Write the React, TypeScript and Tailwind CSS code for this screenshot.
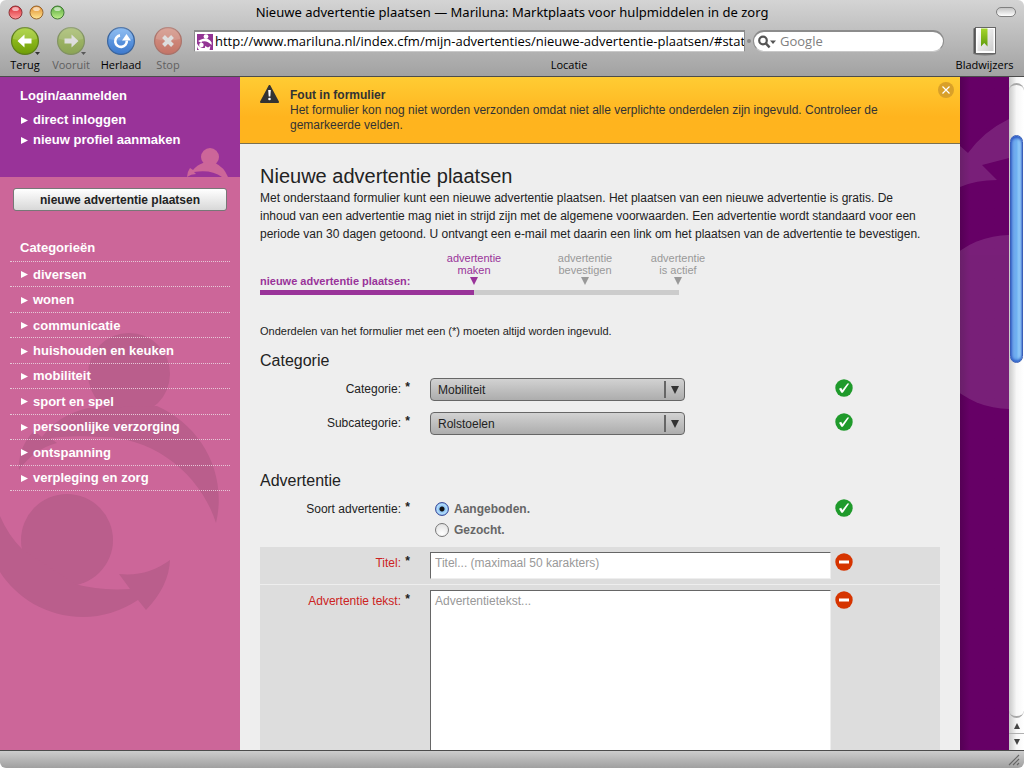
import React, { useState } from 'react';

const categories = [
    'diversen',
    'wonen',
    'communicatie',
    'huishouden en keuken',
    'mobiliteit',
    'sport en spel',
    'persoonlijke verzorging',
    'ontspanning',
    'verpleging en zorg',
];

const steps = [
    { id: 'maken', lines: ['advertentie', 'maken'], active: true },
    { id: 'bevestigen', lines: ['advertentie', 'bevestigen'], active: false },
    { id: 'actief', lines: ['advertentie', 'is actief'], active: false },
];

/* ---------- Icons ---------- */

const OkIcon = () => (
    <svg viewBox="0 0 18 18" className="h-[18px] w-[18px]" role="img" aria-label="ok">
        <circle cx="9" cy="9" r="8.7" fill="#1f9a2b" />
        <path d="M4 9.8 6.2 8.8 7.4 11 12.4 4.4 14.2 4.6 7.8 13.8 6.4 13.8Z" fill="#fff" />
    </svg>
);

const ErrorIcon = () => (
    <svg viewBox="0 0 18 18" className="h-[18px] w-[18px]" role="img" aria-label="fout">
        <circle cx="9" cy="9" r="8.7" fill="#d63400" />
        <rect x="4" y="7.5" width="10" height="3" fill="#fff" />
    </svg>
);

const Bullet = () => (
    <svg viewBox="0 0 7 7" className="h-[7px] w-[7px] flex-none" aria-hidden="true">
        <path d="M0 0 7 3.5 0 7Z" fill="#fff" />
    </svg>
);

const DownTriangle = ({ className }: { className: string }) => (
    <svg viewBox="0 0 8 8" className={className} aria-hidden="true">
        <path d="M0 0H8L4 8Z" fill="currentColor" />
    </svg>
);

const TrafficLight = ({ id, light, dark, rim }: { id: string; light: string; dark: string; rim: string }) => (
    <svg viewBox="0 0 15 15" className="h-[15px] w-[15px]" aria-hidden="true">
        <defs>
            <linearGradient id={id} x1="0" y1="0" x2="0" y2="1">
                <stop offset="0" stopColor={dark} />
                <stop offset="1" stopColor={light} />
            </linearGradient>
        </defs>
        <circle cx="7.5" cy="7.5" r="6.5" fill={`url(#${id})`} stroke={rim} />
        <ellipse cx="7.5" cy="4" rx="3.4" ry="2" fill="#fff" opacity="0.6" />
    </svg>
);

type RoundIconProps = { id: string; from: string; to: string; rim: string; menu?: boolean; children: React.ReactNode };

const RoundIcon = ({ id, from, to, rim, menu, children }: RoundIconProps) => (
    <svg viewBox="0 0 30 30" className="h-[30px] w-[30px]" aria-hidden="true">
        <defs>
            <linearGradient id={id} x1="0" y1="0" x2="0" y2="1">
                <stop offset="0" stopColor={from} />
                <stop offset="1" stopColor={to} />
            </linearGradient>
        </defs>
        <circle cx="15" cy="15" r="13.4" fill={`url(#${id})`} stroke={rim} strokeWidth="1.2" />
        <path d="M3 13A12 12 0 0 1 27 13Q15 16 3 13Z" fill="#fff" opacity="0.16" />
        {children}
        {menu && <path d="M25 26h5l-2.5 3Z" fill="#333" />}
    </svg>
);

const ARROW_LEFT = 'M7.5 15 14.5 8.5V12.6H21.5V17.4H14.5V21.5Z';
const ARROW_RIGHT = 'M22.5 15 15.5 8.5V12.6H8.5V17.4H15.5V21.5Z';

const Favicon = () => (
    <svg viewBox="0 0 16 16" className="h-4 w-4 flex-none" aria-hidden="true">
        <rect width="16" height="16" fill="#933494" />
        <circle cx="9" cy="2.6" r="2.4" fill="#fff" />
        <path d="M1 7 4 5.6Q11 2.6 14.6 8.4L14.6 11Q10 6 5 7.6L4.4 9Z" fill="#fff" />
        <circle cx="4.4" cy="11" r="2.3" fill="#fff" />
        <path d="M0 9.6Q3 15 8 13.8L8 12 11 13.4 13.4 12 12.6 16H2Q0 14 0 12Z" fill="#fff" />
    </svg>
);

const BookmarkIcon = () => (
    <svg viewBox="0 0 26 30" className="h-[30px] w-[26px]" aria-hidden="true">
        <defs>
            <linearGradient id="page" x1="0" y1="0" x2="1" y2="1">
                <stop offset="0" stopColor="#fff" />
                <stop offset="1" stopColor="#ccc" />
            </linearGradient>
            <linearGradient id="ribbon" x1="0" y1="0" x2="0" y2="1">
                <stop offset="0" stopColor="#a5d62c" />
                <stop offset="1" stopColor="#5f9b0c" />
            </linearGradient>
        </defs>
        <ellipse cx="13" cy="28" rx="11" ry="1.5" fill="#000" opacity="0.3" />
        <path d="M1.5 2.5 4 1.5V27L1.5 28Z" fill="#555" />
        <rect x="3.5" y="1.5" width="20" height="26" fill="#fff" stroke="#666" />
        <rect x="5.5" y="3" width="16" height="22" fill="url(#page)" />
        <path d="M9 2.5H15.5V20.5L12.2 17 9 20.5Z" fill="url(#ribbon)" />
    </svg>
);

/* ---------- Browser window ---------- */

type ToolButtonProps = { label: string; className: string; disabled?: boolean; children: React.ReactNode };

const ToolButton = ({ label, className, disabled, children }: ToolButtonProps) => (
    <button
        type="button"
        disabled={disabled}
        className={`flex flex-none flex-col items-center gap-px text-[11px] leading-4 ${className} ${disabled ? 'text-[#606060]' : 'text-black'}`}
    >
        <span className={disabled ? 'opacity-70' : ''}>{children}</span>
        {label}
    </button>
);

const BrowserHeader = () => (
    <header className="flex-none rounded-t-md border-b border-[#4c4c4c] bg-linear-to-b from-[#d4d4d4] to-[#a2a2a2] font-['Open_Sans','Noto_Sans',sans-serif]">
        <div className="flex h-6 items-center px-2">
            <div className="flex w-16 gap-[6px]">
                <TrafficLight id="tl-red" dark="#d8242f" light="#ff9a9a" rim="#8c3438" />
                <TrafficLight id="tl-yellow" dark="#e08a2c" light="#ffe794" rim="#96652f" />
                <TrafficLight id="tl-green" dark="#52a63a" light="#c2f08c" rim="#417a35" />
            </div>
            <p className="flex-1 truncate text-center font-['Noto_Sans',sans-serif] text-[13px] leading-5 text-black">
                Nieuwe advertentie plaatsen — Mariluna: Marktplaats voor hulpmiddelen in de zorg
            </p>
            <div className="flex w-16 justify-end">
                <button type="button" aria-label="Werkbalk tonen" className="h-[10px] w-5 rounded-full border border-[#808080] bg-linear-to-b from-[#c4c4c4] to-white" />
            </div>
        </div>
        <div className="flex h-[52px] pt-[2px]">
            <ToolButton label="Terug" className="ml-0.5 w-[46px]">
                <RoundIcon id="back" from="#a4cf2b" to="#6f9d07" rim="#5d7d1c" menu>
                    <path d={ARROW_LEFT} fill="#fff" />
                </RoundIcon>
            </ToolButton>
            <ToolButton label="Vooruit" className="w-[46px]" disabled>
                <RoundIcon id="forward" from="#a0bf4e" to="#7c9f30" rim="#6c8440" menu>
                    <path d={ARROW_RIGHT} fill="#eee" />
                </RoundIcon>
            </ToolButton>
            <ToolButton label="Herlaad" className="w-[54px]">
                <RoundIcon id="reload" from="#76b0f0" to="#3d78cc" rim="#3a649c">
                    <path d="M14 9.4A5.8 5.8 0 1 0 20.8 14.6" fill="none" stroke="#fff" strokeWidth="2.6" />
                    <path d="M16 14.5 20.5 8 25 14.5Z" fill="#fff" />
                </RoundIcon>
            </ToolButton>
            <ToolButton label="Stop" className="w-10" disabled>
                <RoundIcon id="stop" from="#e08672" to="#cc5b48" rim="#a5584c">
                    <path d="M10.5 10.5 19.5 19.5M19.5 10.5 10.5 19.5" stroke="#eee" strokeWidth="4" />
                </RoundIcon>
            </ToolButton>
            <div className="mr-0.5 ml-[6px] flex min-w-0 flex-1 flex-col pt-1">
                <div className="flex items-center gap-0.5">
                    <div className="flex h-[22px] min-w-0 flex-1 items-center gap-0.5 border border-t-2 border-[#8c8c8c] border-b-[#c8c8c8] bg-white pl-0.5">
                        <Favicon />
                        <input
                            id="location"
                            type="text"
                            defaultValue="http://www.mariluna.nl/index.cfm/mijn-advertenties/nieuwe-advertentie-plaatsen/#stat"
                            className="h-[18px] min-w-0 flex-1 bg-transparent text-[13px] text-black outline-none"
                        />
                    </div>
                    <span className="h-1 w-1 rounded-full bg-[#8a8a8a]" />
                    <div className="flex h-[22px] w-[191px] flex-none items-center gap-1 rounded-full border border-t-2 border-[#8c8c8c] border-b-[#c8c8c8] bg-white pl-1">
                        <svg viewBox="0 0 18 14" className="h-[14px] w-[18px] flex-none" aria-hidden="true">
                            <circle cx="5" cy="5.5" r="3.8" fill="none" stroke="#555" strokeWidth="2.2" />
                            <path d="M7.6 8.2 11.6 12.4" stroke="#555" strokeWidth="2.4" />
                            <path d="M12 5.5h6l-3 3.5Z" fill="#555" />
                        </svg>
                        <input
                            type="search"
                            aria-label="Zoeken met Google"
                            placeholder="Google"
                            className="min-w-0 flex-1 bg-transparent text-[13px] outline-none placeholder:text-[#808080]"
                        />
                    </div>
                </div>
                <label htmlFor="location" className="mt-[5px] text-center text-[11px] leading-4 text-black">
                    Locatie
                </label>
            </div>
            <ToolButton label="Bladwijzers" className="mr-px w-[77px]">
                <BookmarkIcon />
            </ToolButton>
        </div>
    </header>
);

const Scrollbar = () => (
    <div className="flex w-[15px] flex-none flex-col bg-linear-to-r from-[#c9c9c9] via-[#f7f7f7] to-white" aria-hidden="true">
        <div className="mt-[6px] h-[52px] rounded-t-full border-t-2 border-[#a8a8a8]" />
        <div className="mx-px h-[228px] rounded-full border border-[#3a5fb8] bg-linear-to-r from-[#6f9fe6] via-[#6fb0f2] to-[#b4e6ff] shadow-[inset_0_2px_3px_#2750c0,inset_0_-2px_3px_#2f62c8]" />
        <div className="flex-1 rounded-b-full border-b-2 border-[#a8a8a8]" />
        <div className="flex h-4 items-center justify-center border-b border-[#b0b0b0]">
            <DownTriangle className="h-[6px] w-[6px] rotate-180 text-[#444]" />
        </div>
        <div className="flex h-4 items-center justify-center">
            <DownTriangle className="h-[6px] w-[6px] text-[#444]" />
        </div>
    </div>
);

const StatusBar = () => (
    <footer className="flex h-[18px] flex-none items-end justify-end rounded-b-md border-t border-[#4c4c4c] bg-linear-to-b from-[#cdcdcd] to-[#a0a0a0] px-1 pb-0.5">
        <svg viewBox="0 0 12 12" className="h-3 w-3" aria-hidden="true">
            <path d="M1 11 11 1M5 11 11 5M9 11 11 9" stroke="#666" strokeWidth="1.2" />
        </svg>
    </footer>
);

/* ---------- Page ---------- */

const SidebarLink = ({ children }: { children: string }) => (
    <a href="#" className="flex items-center gap-[5px] pl-[11px] text-[13px] leading-5 font-bold text-white">
        <Bullet />
        {children}
    </a>
);

const Sidebar = () => (
    <aside className="relative w-60 flex-none bg-[#cc6699]">
        <svg viewBox="0 0 240 300" className="absolute top-[256px] left-0 h-[300px] w-60" aria-hidden="true">
            <g fill="#ba5e8c">
                <circle cx="129" cy="41" r="41" />
                <circle cx="67" cy="207" r="46" />
                <path d="M19 137Q18 114 34 98L42 104Q58 82 88 75L157 73C200 92 228 139 216 190C200 139 150 102 98 104Q76 102 50 105L57 110Q34 116 19 137Z" />
                <path d="M0 183Q8 202 22 216L75 251Q100 258 130 256L119 241Q147 244 170 227Q169 253 146 277L138 267Q112 284 83 284C46 284 16 264 0 239Z" />
            </g>
        </svg>
        <section className="relative h-[100px] bg-[#993399] px-[10px] pt-[9px]">
            <h2 className="pl-[10px] text-[13px] leading-5 font-bold text-white">Login/aanmelden</h2>
            <nav className="mt-1">
                <SidebarLink>direct inloggen</SidebarLink>
                <SidebarLink>nieuw profiel aanmaken</SidebarLink>
            </nav>
            <svg viewBox="0 0 42 30" className="absolute right-[11px] bottom-0 h-[30px] w-[42px]" aria-hidden="true">
                <circle cx="23" cy="10" r="9" fill="#cc6699" />
                <path d="M0 30Q0 25 3 21L6 23Q10 18 16 16H28Q37 20 41 30H35Q24 22 7 25L9 27Q4 27 0 30Z" fill="#cc6699" />
            </svg>
        </section>
        <div className="relative px-[10px] pt-[11px]">
            <button
                type="button"
                className="mx-[3px] block h-[23px] w-[214px] rounded-[3px] border border-[#777] bg-linear-to-b from-white to-[#d8d8d8] text-[12px] leading-5 font-bold text-[#222]"
            >
                nieuwe advertentie plaatsen
            </button>
            <h2 className="mt-[27px] border-b border-dotted border-[#e6c9d8] pb-[3px] pl-[10px] text-[13px] leading-5 font-bold text-white">
                Categorieën
            </h2>
            <ul className="grid h-[229px] auto-rows-fr">
                {categories.map((category) => (
                    <li key={category} className="flex items-center border-b border-dotted border-[#e6c9d8] pt-px">
                        <SidebarLink>{category}</SidebarLink>
                    </li>
                ))}
            </ul>
        </div>
    </aside>
);

const ErrorBanner = ({ onClose }: { onClose: () => void }) => (
    <div role="alert" className="flex items-start border-b border-[#7a7050] bg-linear-to-b from-[#ffcc33] to-[#ffb41e] to-60% py-[10px] pr-[6px] pl-5 text-[#333]">
        <svg viewBox="0 0 19 18" className="mt-[-2px] mr-[11px] h-[18px] w-[19px] flex-none" aria-hidden="true">
            <path d="M9.5 1 18 17H1Z" fill="#333" stroke="#333" strokeWidth="2" strokeLinejoin="round" />
            <path d="M8.2 5H10.8L10.3 11.6H8.7Z" fill="#fff" />
            <circle cx="9.5" cy="14" r="1.3" fill="#fff" />
        </svg>
        <div className="min-w-0 flex-1 pr-8">
            <h2 className="text-[12px] leading-4 font-bold">Fout in formulier</h2>
            <p className="text-[12px] leading-[15px]">
                Het formulier kon nog niet worden verzonden omdat niet alle verplichte onderdelen zijn ingevuld. Controleer de
                gemarkeerde velden.
            </p>
        </div>
        <button type="button" aria-label="Sluiten" onClick={onClose} className="mt-[-5px] flex h-4 w-4 items-center justify-center rounded-full bg-[#d9a029]">
            <svg viewBox="0 0 8 8" className="h-2 w-2" aria-hidden="true">
                <path d="M0.5 0.5 7.5 7.5M7.5 0.5 0.5 7.5" stroke="#fff" strokeWidth="1.2" />
            </svg>
        </button>
    </div>
);

const Progress = () => (
    <div className="mt-[9px] w-[448px] text-[11px] leading-3">
        <div className="grid grid-cols-[184px_60px_51px_60px_33px_60px]">
            <p className="self-end leading-2 font-bold text-[#993399]">nieuwe advertentie plaatsen:</p>
            {steps.map((step, i) => (
                <React.Fragment key={step.id}>
                    {i > 0 && <span />}
                    <div className={`flex flex-col items-center ${step.active ? 'text-[#993399]' : 'text-[#999]'}`}>
                        {step.lines.map((line) => (
                            <span key={line}>{line}</span>
                        ))}
                        <DownTriangle className="mt-px h-2 w-2" />
                    </div>
                </React.Fragment>
            ))}
        </div>
        <div className="mt-[5px] flex h-[5px] w-[419px] bg-[#ccc]">
            <div className="w-[214px] bg-[#993399]" />
        </div>
    </div>
);

type FieldProps = { label: string; htmlFor?: string; className?: string; valid: boolean; children: React.ReactNode };

const Field = ({ label, htmlFor, className = '', valid, children }: FieldProps) => (
    <div className={`flex items-start ${className}`}>
        <label htmlFor={htmlFor} className={`w-[150px] flex-none text-right text-[12px] leading-[22px] ${valid ? 'text-[#222]' : 'text-[#cc2222]'}`}>
            {label}: <b className="ml-px align-[2px] leading-none text-[#222]">*</b>
        </label>
        <div className="ml-5 w-[401px] flex-none">{children}</div>
        <span className="mt-px ml-1 flex-none">{valid ? <OkIcon /> : <ErrorIcon />}</span>
    </div>
);

const SelectBox = ({ id, options }: { id: string; options: string[] }) => (
    <div className="relative w-[255px]">
        <select
            id={id}
            className="block h-[23px] w-full appearance-none rounded-[4px] border border-[#666] bg-linear-to-b from-[#d2d2d2] to-[#adadad] pl-[7px] text-[12px] text-[#222]"
        >
            {options.map((option) => (
                <option key={option}>{option}</option>
            ))}
        </select>
        <span className="pointer-events-none absolute inset-y-[3px] right-0 flex w-[21px] items-center border-l-2 border-[#666] pl-[5px]">
            <DownTriangle className="h-2 w-2 text-[#333]" />
        </span>
    </div>
);

const radioClass =
    'h-[14px] w-[14px] appearance-none rounded-full border border-[#777] bg-[radial-gradient(circle_at_50%_80%,#fff,#ddd)] checked:border-[#3d4d9c] checked:bg-[radial-gradient(circle,#111_0_2px,#8fc4f5_3px,#b4defa_5px,#4b7fd0_7px)]';

const AdvertForm = () => {
    const [kind, setKind] = useState('aangeboden');

    return (
        <form>
            <p className="mt-7 text-[11px] leading-4">Onderdelen van het formulier met een (*) moeten altijd worden ingevuld.</p>

            <h2 className="mt-3 text-[16px] leading-5">Categorie</h2>
            <Field label="Categorie" htmlFor="categorie" className="mt-[7px] h-[34px]" valid>
                <SelectBox id="categorie" options={['Mobiliteit', 'Wonen', 'Communicatie']} />
            </Field>
            <Field label="Subcategorie" htmlFor="subcategorie" className="h-[34px]" valid>
                <SelectBox id="subcategorie" options={['Rolstoelen', 'Scootmobielen']} />
            </Field>

            <h2 className="mt-[25px] text-[16px] leading-5">Advertentie</h2>
            <Field label="Soort advertentie" htmlFor="aangeboden" className="mt-[7px] h-[49px]" valid>
                {['Aangeboden', 'Gezocht'].map((option) => (
                    <label key={option} className="flex h-[21px] items-center gap-[5px] pl-[5px] text-[12px] font-bold text-[#666]">
                        <input
                            id={option.toLowerCase()}
                            type="radio"
                            name="soort"
                            value={option.toLowerCase()}
                            checked={kind === option.toLowerCase()}
                            onChange={(e) => setKind(e.target.value)}
                            className={radioClass}
                        />
                        {option}.
                    </label>
                ))}
            </Field>

            <Field label="Titel" htmlFor="titel" className="bg-[#ddd] py-[5px]" valid={false}>
                <input
                    id="titel"
                    type="text"
                    maxLength={50}
                    placeholder="Titel... (maximaal 50 karakters)"
                    className="block h-[27px] w-full border border-t-[#666] border-r-[#eee] border-b-[#eee] border-l-[#666] bg-white px-1 pb-[5px] text-[12px] outline-none placeholder:text-[#999]"
                />
            </Field>
            <Field label="Advertentie tekst" htmlFor="tekst" className="mt-px bg-[#ddd] py-[5px]" valid={false}>
                <textarea
                    id="tekst"
                    rows={14}
                    placeholder="Advertentietekst..."
                    className="block w-full resize-none border border-t-[#666] border-r-[#eee] border-b-[#eee] border-l-[#666] bg-white px-1 py-0.5 text-[12px] leading-4 outline-none placeholder:text-[#999]"
                />
            </Field>
        </form>
    );
};

const PurpleMargin = () => (
    <div className="w-[49px] flex-none overflow-hidden bg-linear-to-r from-[#550055] to-[#660066] to-20%">
        <svg viewBox="0 0 49 340" className="h-[340px] w-[49px]" aria-hidden="true">
            <g fill="#fff" opacity="0.12">
                <path d="M0 69 8 76Q24 54 49 42V81L22 88 37 103Q16 103 0 110Z" />
                <circle cx="50" cy="245" r="87" />
            </g>
        </svg>
    </div>
);

export default function App() {
    const [showError, setShowError] = useState(true);

    return (
        <div className="flex h-screen flex-col overflow-hidden bg-white font-['Liberation_Sans',Arial,sans-serif]">
            <BrowserHeader />
            <div className="flex min-h-0 flex-1 overflow-hidden">
                <Sidebar />
                <main className="min-w-0 flex-1 overflow-hidden bg-[#eee] text-[#222]">
                    {showError && <ErrorBanner onClose={() => setShowError(false)} />}
                    <div className="px-5 pt-5">
                        <h1 className="text-[20px] leading-6">Nieuwe advertentie plaatsen</h1>
                        <p className="mt-px pr-3 text-[12px] leading-[18px]">
                            Met onderstaand formulier kunt een nieuwe advertentie plaatsen. Het plaatsen van een nieuwe advertentie is gratis. De
                            inhoud van een advertentie mag niet in strijd zijn met de algemene voorwaarden. Een advertentie wordt standaard voor een
                            periode van 30 dagen getoond. U ontvangt een e-mail met daarin een link om het plaatsen van de advertentie te bevestigen.
                        </p>
                        <Progress />
                        <AdvertForm />
                    </div>
                </main>
                <PurpleMargin />
                <Scrollbar />
            </div>
            <StatusBar />
        </div>
    );
}
